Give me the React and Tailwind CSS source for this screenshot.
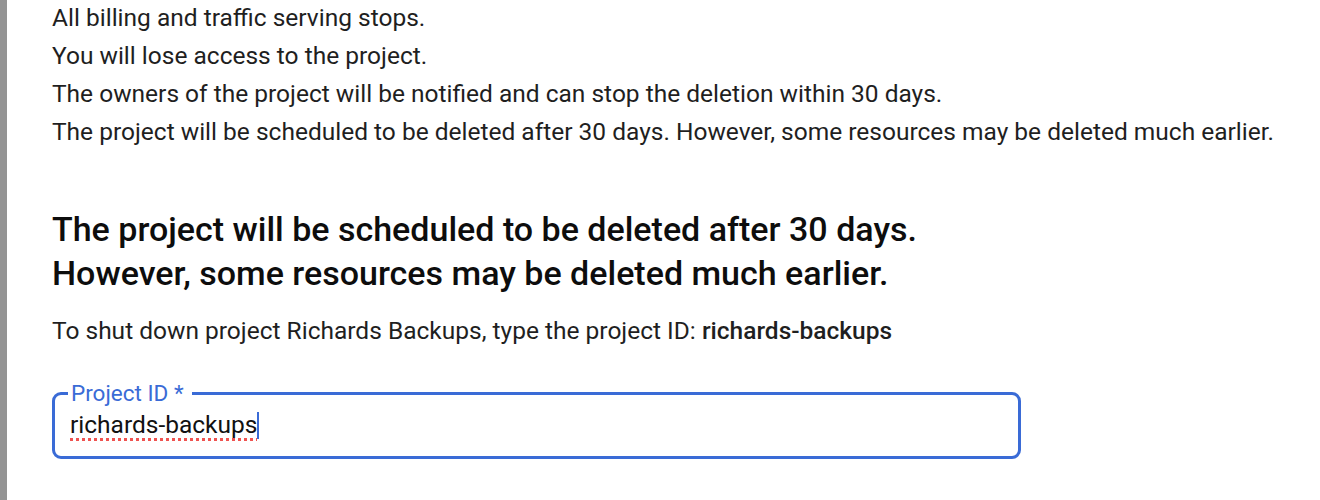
export default function App() {
  const points = [
    "All billing and traffic serving stops.",
    "You will lose access to the project.",
    "The owners of the project will be notified and can stop the deletion within 30 days.",
    "The project will be scheduled to be deleted after 30 days. However, some resources may be deleted much earlier.",
  ];

  return (
    <div className="h-[500px] w-[1320px] bg-white font-['Roboto',sans-serif] text-[#1f1f1f] overflow-hidden flex">
      <div className="w-[7px] shrink-0 bg-[#949494]" />
      <div className="pl-[45px] flex-1">
        {/* What happens on shutdown */}
        <div className="-mt-px">
          {points.map((t) => (
            <p key={t} className="text-[24.5px] leading-[38px]">{t}</p>
          ))}
        </div>

        <h2 className="mt-[56px] text-[34px] leading-[44px] font-medium text-[#0d0d0d]">
          The project will be scheduled to be deleted after 30 days.
          <br />
          However, some resources may be deleted much earlier.
        </h2>

        <p className="mt-[17px] text-[24.5px] leading-[38px]">
          To shut down project Richards Backups, type the project ID:{" "}
          <span className="font-medium">richards-backups</span>
        </p>

        {/* Project ID field */}
        <fieldset className="mt-[31px] w-[969px] h-[78px] border-[3px] border-[#3a6bd6] rounded-[9px] pl-[13px] pr-3">
          <legend className="pl-[3px] pr-[8px] text-[22.5px] leading-[24px] text-[#3a6bd6]">Project ID *</legend>
          <div className="flex items-center h-[34px] pl-[2px] mt-[3px]">
            <span className="text-[24.5px] leading-[30px] text-[#111] underline decoration-dotted decoration-[#ef5350] decoration-[3px] underline-offset-[5px]">
              richards-backups
            </span>
            <span className="w-[2px] h-[27px] bg-[#3a6bd6]" />
          </div>
        </fieldset>
      </div>
    </div>
  );
}
